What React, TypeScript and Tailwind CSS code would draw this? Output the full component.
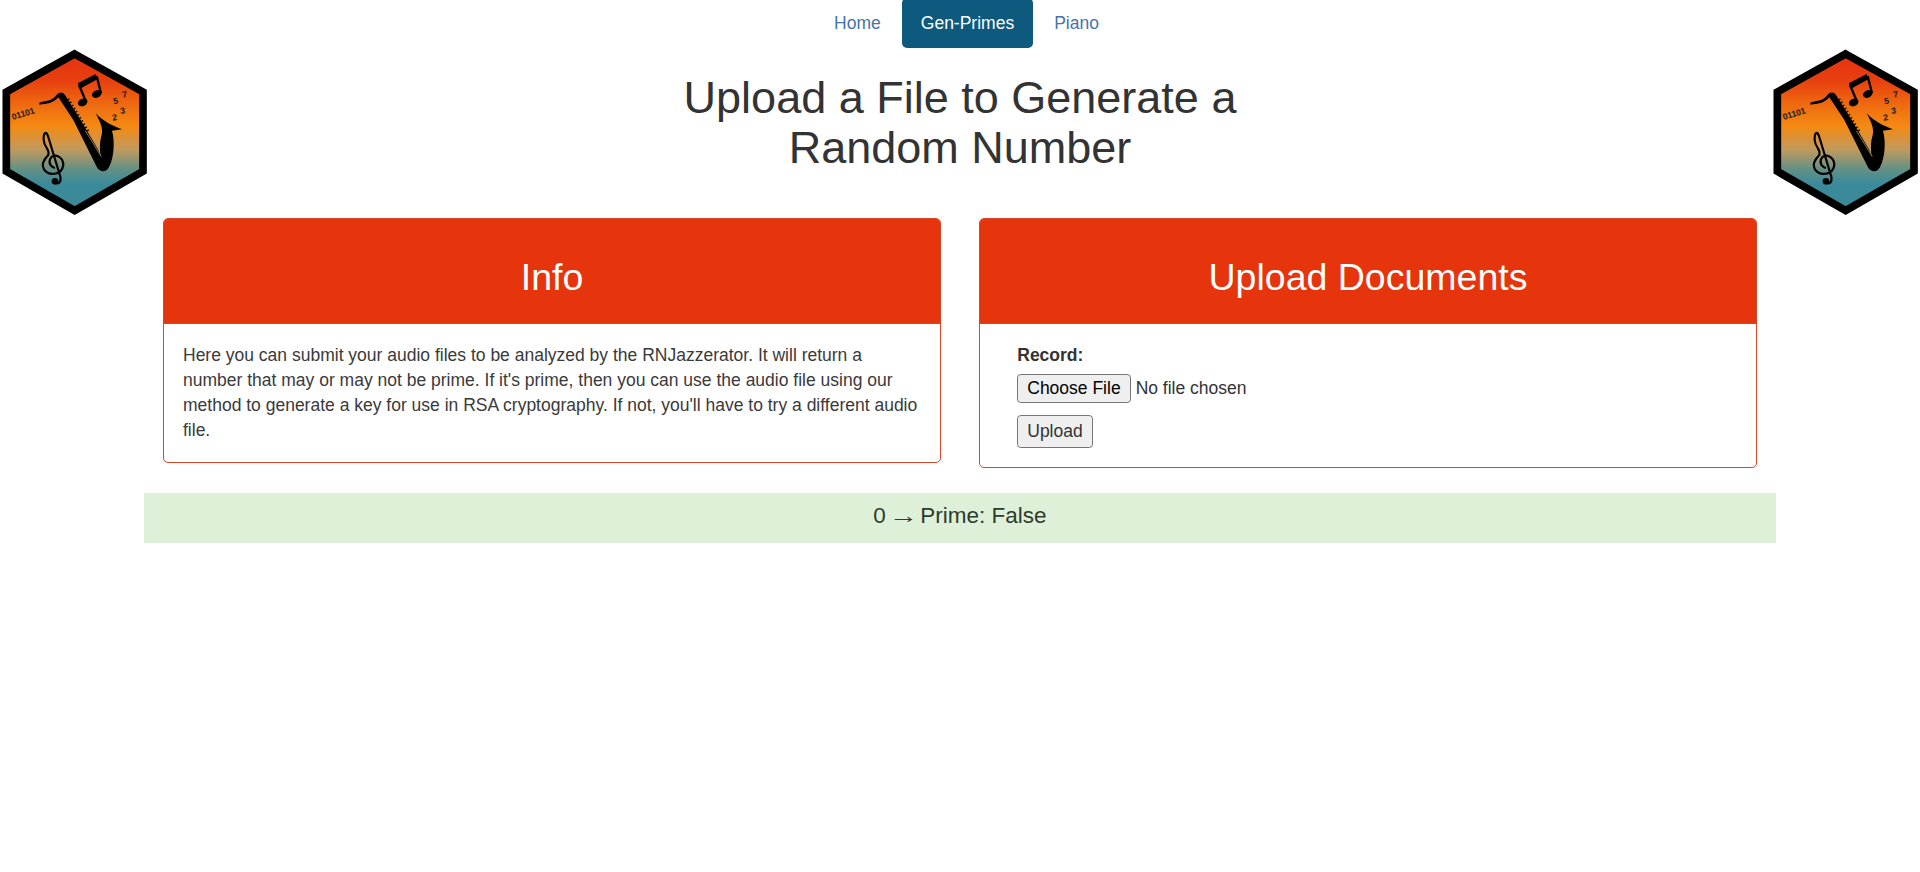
import React from "react";

function Logo({ id, className }: { id: string; className: string }) {
  return (
    <svg viewBox="0 0 480 570" className={className} aria-label="RNJazzerator logo">
      <defs>
        <linearGradient id={id} x1="0" y1="55" x2="0" y2="497" gradientUnits="userSpaceOnUse">
          <stop offset="0" stopColor="#e6330f" />
          <stop offset="0.15" stopColor="#e8400f" />
          <stop offset="0.33" stopColor="#ef6e10" />
          <stop offset="0.46" stopColor="#f58a12" />
          <stop offset="0.62" stopColor="#c09a5e" />
          <stop offset="0.76" stopColor="#5f9088" />
          <stop offset="0.85" stopColor="#3b8a9a" />
          <stop offset="1" stopColor="#3a8a9a" />
        </linearGradient>
      </defs>
      <polygon
        points="224,42 429,156 429,394 224,512 19,394 19,156"
        fill={`url(#${id})`}
        stroke="#000"
        strokeWidth="23"
      />
      {/* saxophone */}
      <path
        d="M118 188C135 180 150 185 165 170C175 156 188 152 197 168L242 240L295 330L302 348C298 322 300 302 305 285C310 265 300 245 287 220C310 245 340 258 366 268L336 272C344 300 344 350 326 383C315 400 298 395 290 380L220 240L175 172C160 190 140 192 118 194Z"
        fill="#000"
      />
      <path d="M205 176L268 278" stroke="#000" strokeWidth="6" strokeDasharray="4 7" fill="none" />
      <path d="M256 272L304 350" stroke="#b08f68" strokeWidth="2.5" fill="none" />
      {/* beamed note */}
      <path d="M233 130L287 102L292 118L240 146Z" fill="#000" />
      <path d="M237 135L258 185M290 108L303 160" stroke="#000" strokeWidth="7" fill="none" />
      <ellipse cx="248" cy="187" rx="15" ry="11" transform="rotate(-25 248 187)" fill="#000" />
      <ellipse cx="290" cy="162" rx="15" ry="11" transform="rotate(-25 290 162)" fill="#000" />
      {/* treble clef */}
      <path
        d="M160 425C180 440 186 420 178 400L146 295C140 268 130 278 131 300C133 325 150 325 145 345C130 360 124 375 132 388C145 408 185 408 190 375C190 350 160 335 150 358C145 372 155 382 165 384"
        fill="none"
        stroke="#000"
        strokeWidth="6.5"
      />
      <circle cx="165" cy="424" r="10" fill="#000" />
      {/* digits */}
      <g fontFamily="'Liberation Sans', sans-serif" fontWeight="700" fill="#1a1a1a">
        <text x="38" y="240" fontSize="26" transform="rotate(-17 38 240)">01101</text>
        <text x="338" y="242" fontSize="26" transform="rotate(-10 338 242)">2</text>
        <text x="362" y="222" fontSize="26" transform="rotate(-10 362 222)">3</text>
        <text x="341" y="193" fontSize="26" transform="rotate(-10 341 193)">5</text>
        <text x="368" y="173" fontSize="26" transform="rotate(-10 368 173)">7</text>
      </g>
    </svg>
  );
}

function NavLink({ label, active }: { label: string; active?: boolean }) {
  return (
    <a
      href="#"
      className={
        active
          ? "block px-[18.75px] py-[12.5px] rounded-[5px] bg-[#0d5a7e] text-white"
          : "block px-[18.75px] py-[12.5px] rounded-[5px] text-[#4574a8]"
      }
    >
      {label}
    </a>
  );
}

function PanelCard({ title, children }: { title: string; children: React.ReactNode }) {
  return (
    <div className="rounded-[5px] border-[1.25px] border-[#d9472b] bg-white overflow-hidden">
      <div className="bg-[#e6340c] pt-[38px] pb-[25px] text-center text-[37.5px] leading-[41.25px] text-white">
        {title}
      </div>
      <div className="border-t-[1.25px] border-[#d9472b] p-[18.75px]">{children}</div>
    </div>
  );
}

export default function App() {
  return (
    <div className="relative flow-root h-[872px] overflow-hidden bg-white font-['Liberation_Sans',Arial,sans-serif] text-[17.5px] leading-[25px] text-[#333]">
      <Logo id="hexLeft" className="absolute left-0 top-[40px] w-[160px] h-[190px]" />
      <Logo id="hexRight" className="absolute left-[1771px] top-[40px] w-[160px] h-[190px]" />

      <nav className="flex justify-center gap-[2.5px] -mt-[2px] pl-[13px]">
        <NavLink label="Home" />
        <NavLink label="Gen-Primes" active />
        <NavLink label="Piano" />
      </nav>

      <h1 className="mx-auto mt-[25px] w-[600px] text-center text-[45px] leading-[49.5px] font-normal">
        Upload a File to Generate a Random Number
      </h1>

      <main className="mx-auto mt-[46px] w-[1632px]">
        <div className="grid grid-cols-2 items-start">
          <div className="px-[18.75px]">
            <PanelCard title="Info">
              <p className="pl-[0.5px] text-[#3a3a3a]">
                Here you can submit your audio files to be analyzed by the RNJazzerator. It will return a
                number that may or may not be prime. If it's prime, then you can use the audio file using our
                method to generate a key for use in RSA cryptography. If not, you'll have to try a different
                audio file.
              </p>
            </PanelCard>
          </div>
          <div className="px-[18.75px]">
            <PanelCard title="Upload Documents">
              <form className="px-[18.75px]" onSubmit={(e) => e.preventDefault()}>
                <label className="block font-bold mb-[6.25px]">Record:</label>
                <input
                  type="file"
                  className="block h-[29px] w-[400px] text-[17.5px] leading-[25px] file:mr-[5px] file:h-[29px] file:px-[9px] file:rounded-[3.75px] file:border-[1.25px] file:border-solid file:border-[#767676] file:bg-[#efefef] file:text-black"
                />
                <button
                  type="submit"
                  className="block mt-[12px] h-[33px] px-[9px] rounded-[3.75px] border-[1.25px] border-[#767676] bg-[#efefef] text-[#333]"
                >
                  Upload
                </button>
              </form>
            </PanelCard>
          </div>
        </div>

        <div className="mt-[25px] h-[50px] pb-[5px] bg-[#dff0d8] flex items-center justify-center gap-[6px] text-[22.5px] text-[#2f3b2f]">
          <span>0</span>
          <span className="inline-block scale-x-[1.3]">→</span>
          <span>Prime: False</span>
        </div>
      </main>
    </div>
  );
}
